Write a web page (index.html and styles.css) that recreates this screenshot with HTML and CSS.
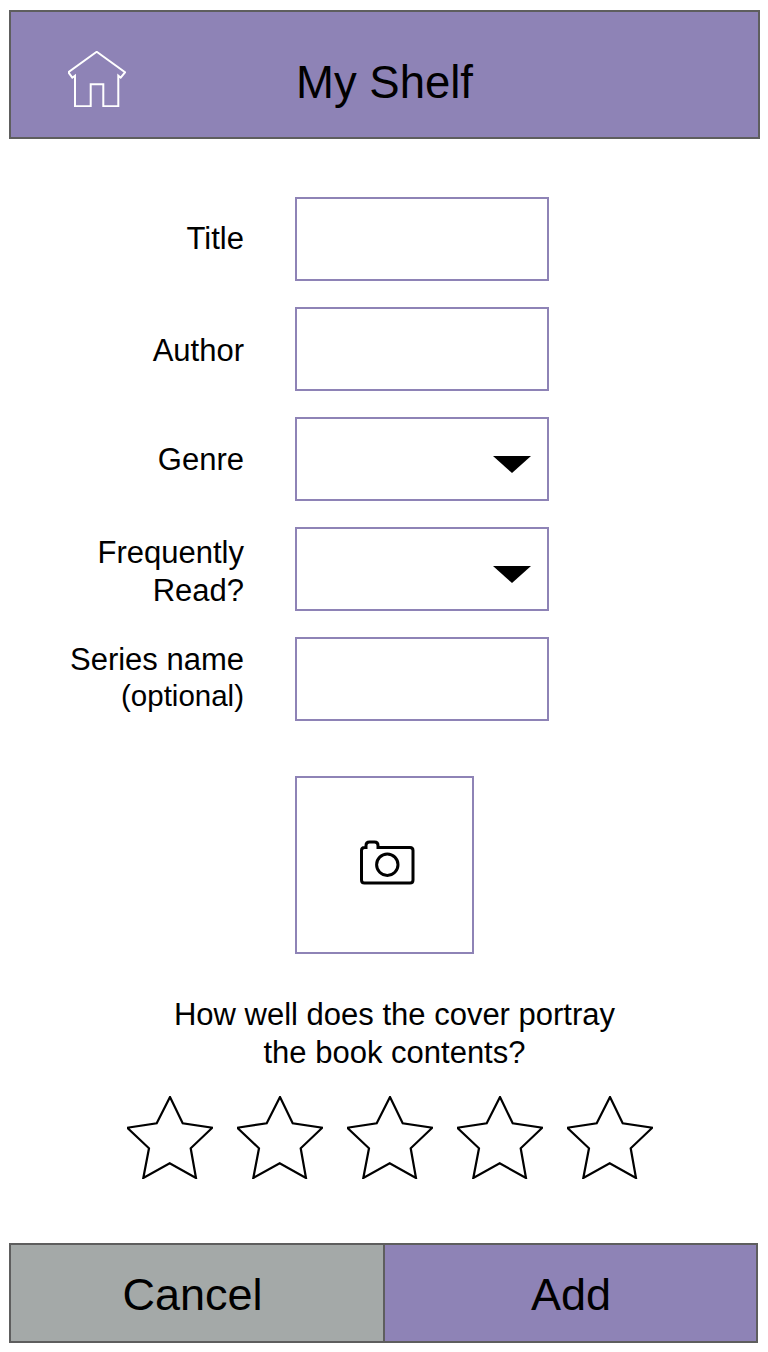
FILE: index.html
```html
<!DOCTYPE html>
<html lang="en">
<head>
    <meta charset="UTF-8">
    <meta name="viewport" content="width=device-width, initial-scale=1.0">
    <title>My Shelf</title>
    <link rel="stylesheet" href="styles.css">
</head>
<body>

    <header class="header">
        <svg class="home-icon" width="58" height="56" viewBox="0 0 58 56">
            <path d="M28.7 .8 L57 21.3 L52.7 26.7 L50.3 24.7 V55.3 H35.3 V33.3 H22.7 V55.3 H7 V24.7 L4.3 26.7 L.4 21.3 Z"/>
        </svg>
        <h1 class="header-title">My Shelf</h1>
    </header>

    <form class="form">
        <label class="label" for="title">Title</label>
        <input class="field" type="text" id="title">

        <label class="label label-low" for="author">Author</label>
        <input class="field" type="text" id="author">

        <div class="label label-genre">Genre</div>
        <div class="field field-select"><span class="arrow"></span></div>

        <div class="label label-tall">Frequently<br>Read?</div>
        <div class="field field-select"><span class="arrow"></span></div>

        <label class="label label-series" for="series">Series name<br><span class="optional">(optional)</span></label>
        <input class="field" type="text" id="series">
    </form>

    <div class="photo-row">
        <div class="photo">
            <svg class="camera-icon" width="56" height="46" viewBox="0 0 56 46">
                <path d="M7 7.5 V5.5 Q7 2 10.5 2 H15.5 Q19 2 19 5.5 V7.5 H51 Q54 7.5 54 10.5 V40 Q54 43 51 43 H5.5 Q2.5 43 2.5 40 V10.5 Q2.5 7.5 5.5 7.5 Z"/>
                <circle cx="28.3" cy="24.7" r="10.7"/>
            </svg>
        </div>
    </div>

    <p class="question">How well does the cover portray<br>the book contents?</p>

    <div class="stars">
        <svg class="star" width="86" height="83" viewBox="0 0 86 83"><path d="M43 1 L55.7 27.3 L85.3 31.7 L63.7 52.3 L69 82 L42.7 67.3 L16.3 82 L22 52.3 L.3 31.7 L29.7 27.3 Z"/></svg>
        <svg class="star" width="86" height="83" viewBox="0 0 86 83"><path d="M43 1 L55.7 27.3 L85.3 31.7 L63.7 52.3 L69 82 L42.7 67.3 L16.3 82 L22 52.3 L.3 31.7 L29.7 27.3 Z"/></svg>
        <svg class="star" width="86" height="83" viewBox="0 0 86 83"><path d="M43 1 L55.7 27.3 L85.3 31.7 L63.7 52.3 L69 82 L42.7 67.3 L16.3 82 L22 52.3 L.3 31.7 L29.7 27.3 Z"/></svg>
        <svg class="star" width="86" height="83" viewBox="0 0 86 83"><path d="M43 1 L55.7 27.3 L85.3 31.7 L63.7 52.3 L69 82 L42.7 67.3 L16.3 82 L22 52.3 L.3 31.7 L29.7 27.3 Z"/></svg>
        <svg class="star" width="86" height="83" viewBox="0 0 86 83"><path d="M43 1 L55.7 27.3 L85.3 31.7 L63.7 52.3 L69 82 L42.7 67.3 L16.3 82 L22 52.3 L.3 31.7 L29.7 27.3 Z"/></svg>
    </div>

    <div class="buttons">
        <button class="btn btn-cancel" type="button">Cancel</button>
        <button class="btn btn-add" type="button">Add</button>
    </div>

</body>
</html>
```

FILE: styles.css
```css
body {
    margin: 0;
    padding: 10px 8px 0 9px;
    font-family: "Liberation Sans", Arial, sans-serif;
    color: #000;
    background: #fff;
}
.header {
    display: flex;
    align-items: center;
    box-sizing: border-box;
    height: 129px;
    padding: 14px 0 0 57px;
    background: #8e83b6;
    border: 2px solid #5e5e5e;
}
.home-icon {
    flex: none;
    margin-bottom: 6px;
}
.home-icon path {
    fill: none;
    stroke: #fff;
    stroke-width: 2;
}
.header-title {
    margin: 2px 0 0 170px;
    font-size: 45.5px;
    font-weight: normal;
}
.form {
    display: grid;
    grid-template-columns: 235px 254px;
    column-gap: 51px;
    row-gap: 26px;
    margin-top: 58px;
}
.label {
    align-self: center;
    text-align: right;
    font-size: 31px;
    line-height: 38px;
}
.label-low {
    padding-top: 3px;
}
.label-genre {
    padding-top: 2px;
}
.label-tall {
    padding-top: 6px;
}
.label-series {
    line-height: 36px;
    padding-bottom: 3px;
}
.optional {
    font-size: 29.5px;
}
.field {
    display: block;
    box-sizing: border-box;
    width: 254px;
    height: 84px;
    margin: 0;
    padding: 0;
    background: #fff;
    border: 2px solid #8e83b6;
    border-radius: 0;
}
.field-select {
    display: flex;
    justify-content: flex-end;
    align-items: center;
    padding: 11px 16px 0 0;
}
.arrow {
    width: 0;
    height: 0;
    border-left: 19px solid transparent;
    border-right: 19px solid transparent;
    border-top: 17px solid #000;
}
.photo-row {
    margin: 55px 0 0 286px;
}
.photo {
    display: flex;
    justify-content: center;
    align-items: center;
    box-sizing: border-box;
    width: 179px;
    height: 178px;
    border: 2px solid #8e83b6;
}
.camera-icon {
    margin: 0 0 4px 5px;
}
.camera-icon path,
.camera-icon circle {
    fill: none;
    stroke: #000;
    stroke-width: 3;
}
.question {
    margin: 42px 0 0 0;
    padding-left: 20px;
    text-align: center;
    font-size: 31px;
    line-height: 38px;
}
.stars {
    display: flex;
    gap: 24px;
    margin: 24px 0 0 118px;
}
.star {
    flex: none;
}
.star path {
    fill: none;
    stroke: #000;
    stroke-width: 2.2;
}
.buttons {
    display: flex;
    box-sizing: border-box;
    width: 749px;
    height: 100px;
    margin-top: 64px;
    border: 2px solid #5e5e5e;
}
.btn {
    box-sizing: border-box;
    margin: 0;
    padding: 4px 0 0 0;
    border: none;
    font-family: inherit;
    font-size: 45px;
    color: #000;
}
.btn-cancel {
    width: 374px;
    padding-right: 9px;
    background: #a4a9a8;
    border-right: 2px solid #5e5e5e;
}
.btn-add {
    width: 371px;
    padding-left: 1px;
    background: #8e83b6;
}
```
